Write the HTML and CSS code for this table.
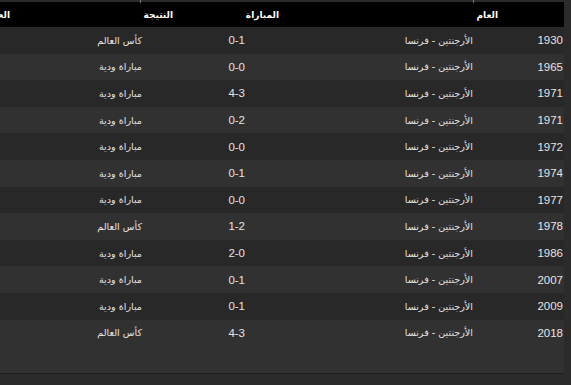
FILE: index.html
```html
<!DOCTYPE html>
<html lang="ar">
<head>
<meta charset="utf-8">
<title>مباريات الأرجنتين - فرنسا</title>
<link rel="stylesheet" href="styles.css">
</head>
<body>
<div class="page">
  <span class="tick tick-a"></span>
  <span class="tick tick-b"></span>
  <div class="table">
    <div class="thead">
      <div class="th">العام</div>
      <div class="th">المباراة</div>
      <div class="th">النتيجة</div>
      <div class="th">الحدث</div>
    </div>
    <div class="tbody">
      <div class="tr"><div class="td num">1930</div><div class="td ar">الأرجنتين - فرنسا</div><div class="td num">0-1</div><div class="td ar">كأس العالم</div></div>
      <div class="tr"><div class="td num">1965</div><div class="td ar">الأرجنتين - فرنسا</div><div class="td num">0-0</div><div class="td ar">مباراة ودية</div></div>
      <div class="tr"><div class="td num">1971</div><div class="td ar">الأرجنتين - فرنسا</div><div class="td num">4-3</div><div class="td ar">مباراة ودية</div></div>
      <div class="tr"><div class="td num">1971</div><div class="td ar">الأرجنتين - فرنسا</div><div class="td num">0-2</div><div class="td ar">مباراة ودية</div></div>
      <div class="tr"><div class="td num">1972</div><div class="td ar">الأرجنتين - فرنسا</div><div class="td num">0-0</div><div class="td ar">مباراة ودية</div></div>
      <div class="tr"><div class="td num">1974</div><div class="td ar">الأرجنتين - فرنسا</div><div class="td num">0-1</div><div class="td ar">مباراة ودية</div></div>
      <div class="tr"><div class="td num">1977</div><div class="td ar">الأرجنتين - فرنسا</div><div class="td num">0-0</div><div class="td ar">مباراة ودية</div></div>
      <div class="tr"><div class="td num">1978</div><div class="td ar">الأرجنتين - فرنسا</div><div class="td num">1-2</div><div class="td ar">كأس العالم</div></div>
      <div class="tr"><div class="td num">1986</div><div class="td ar">الأرجنتين - فرنسا</div><div class="td num">2-0</div><div class="td ar">مباراة ودية</div></div>
      <div class="tr"><div class="td num">2007</div><div class="td ar">الأرجنتين - فرنسا</div><div class="td num">0-1</div><div class="td ar">مباراة ودية</div></div>
      <div class="tr"><div class="td num">2009</div><div class="td ar">الأرجنتين - فرنسا</div><div class="td num">0-1</div><div class="td ar">مباراة ودية</div></div>
      <div class="tr"><div class="td num">2018</div><div class="td ar">الأرجنتين - فرنسا</div><div class="td num">4-3</div><div class="td ar">كأس العالم</div></div>
    </div>
    <div class="tfoot"></div>
  </div>
</div>
</body>
</html>
```

FILE: styles.css
```css
html, body {
  margin: 0;
  padding: 0;
  background: #2b2b2b;
}
body {
  font-family: "Liberation Sans", "DejaVu Sans", sans-serif;
  color: #e4e4e4;
  font-size: 11px;
}
.page {
  position: relative;
  width: 571px;
  height: 385px;
  overflow: hidden;
  padding-top: 2px;
  box-sizing: border-box;
}
.tick {
  position: absolute;
  top: 0;
  width: 1px;
  height: 3px;
  background: #7a7a7a;
}
.tick-a { left: 140px; }
.tick-b { left: 473px; }
.table {
  width: 564px;
  background: #313131;
  border-bottom: 1px solid #1d1d1d;
  overflow: hidden;
  direction: rtl;
}
.thead {
  display: grid;
  grid-template-columns: 219px 106px 163px 1fr;
  height: 25px;
  align-items: center;
  padding-right: 66px;
  background: #000;
  white-space: nowrap;
}
.th {
  font-family: "DejaVu Sans", sans-serif;
  font-weight: bold;
  font-size: 9px;
  color: #fff;
}
.tr {
  display: grid;
  grid-template-columns: 90px 228px 103px 1fr;
  height: 26.6px;
  align-items: center;
  white-space: nowrap;
}
.tr:nth-child(odd) { background: #282828; }
.tr:nth-child(even) { background: #313131; }
.td {
  padding-right: 1px;
}
.num {
  font-size: 11.5px;
}
.ar {
  font-family: "DejaVu Sans", sans-serif;
  font-size: 9.6px;
}
.tfoot {
  height: 27px;
}
```
